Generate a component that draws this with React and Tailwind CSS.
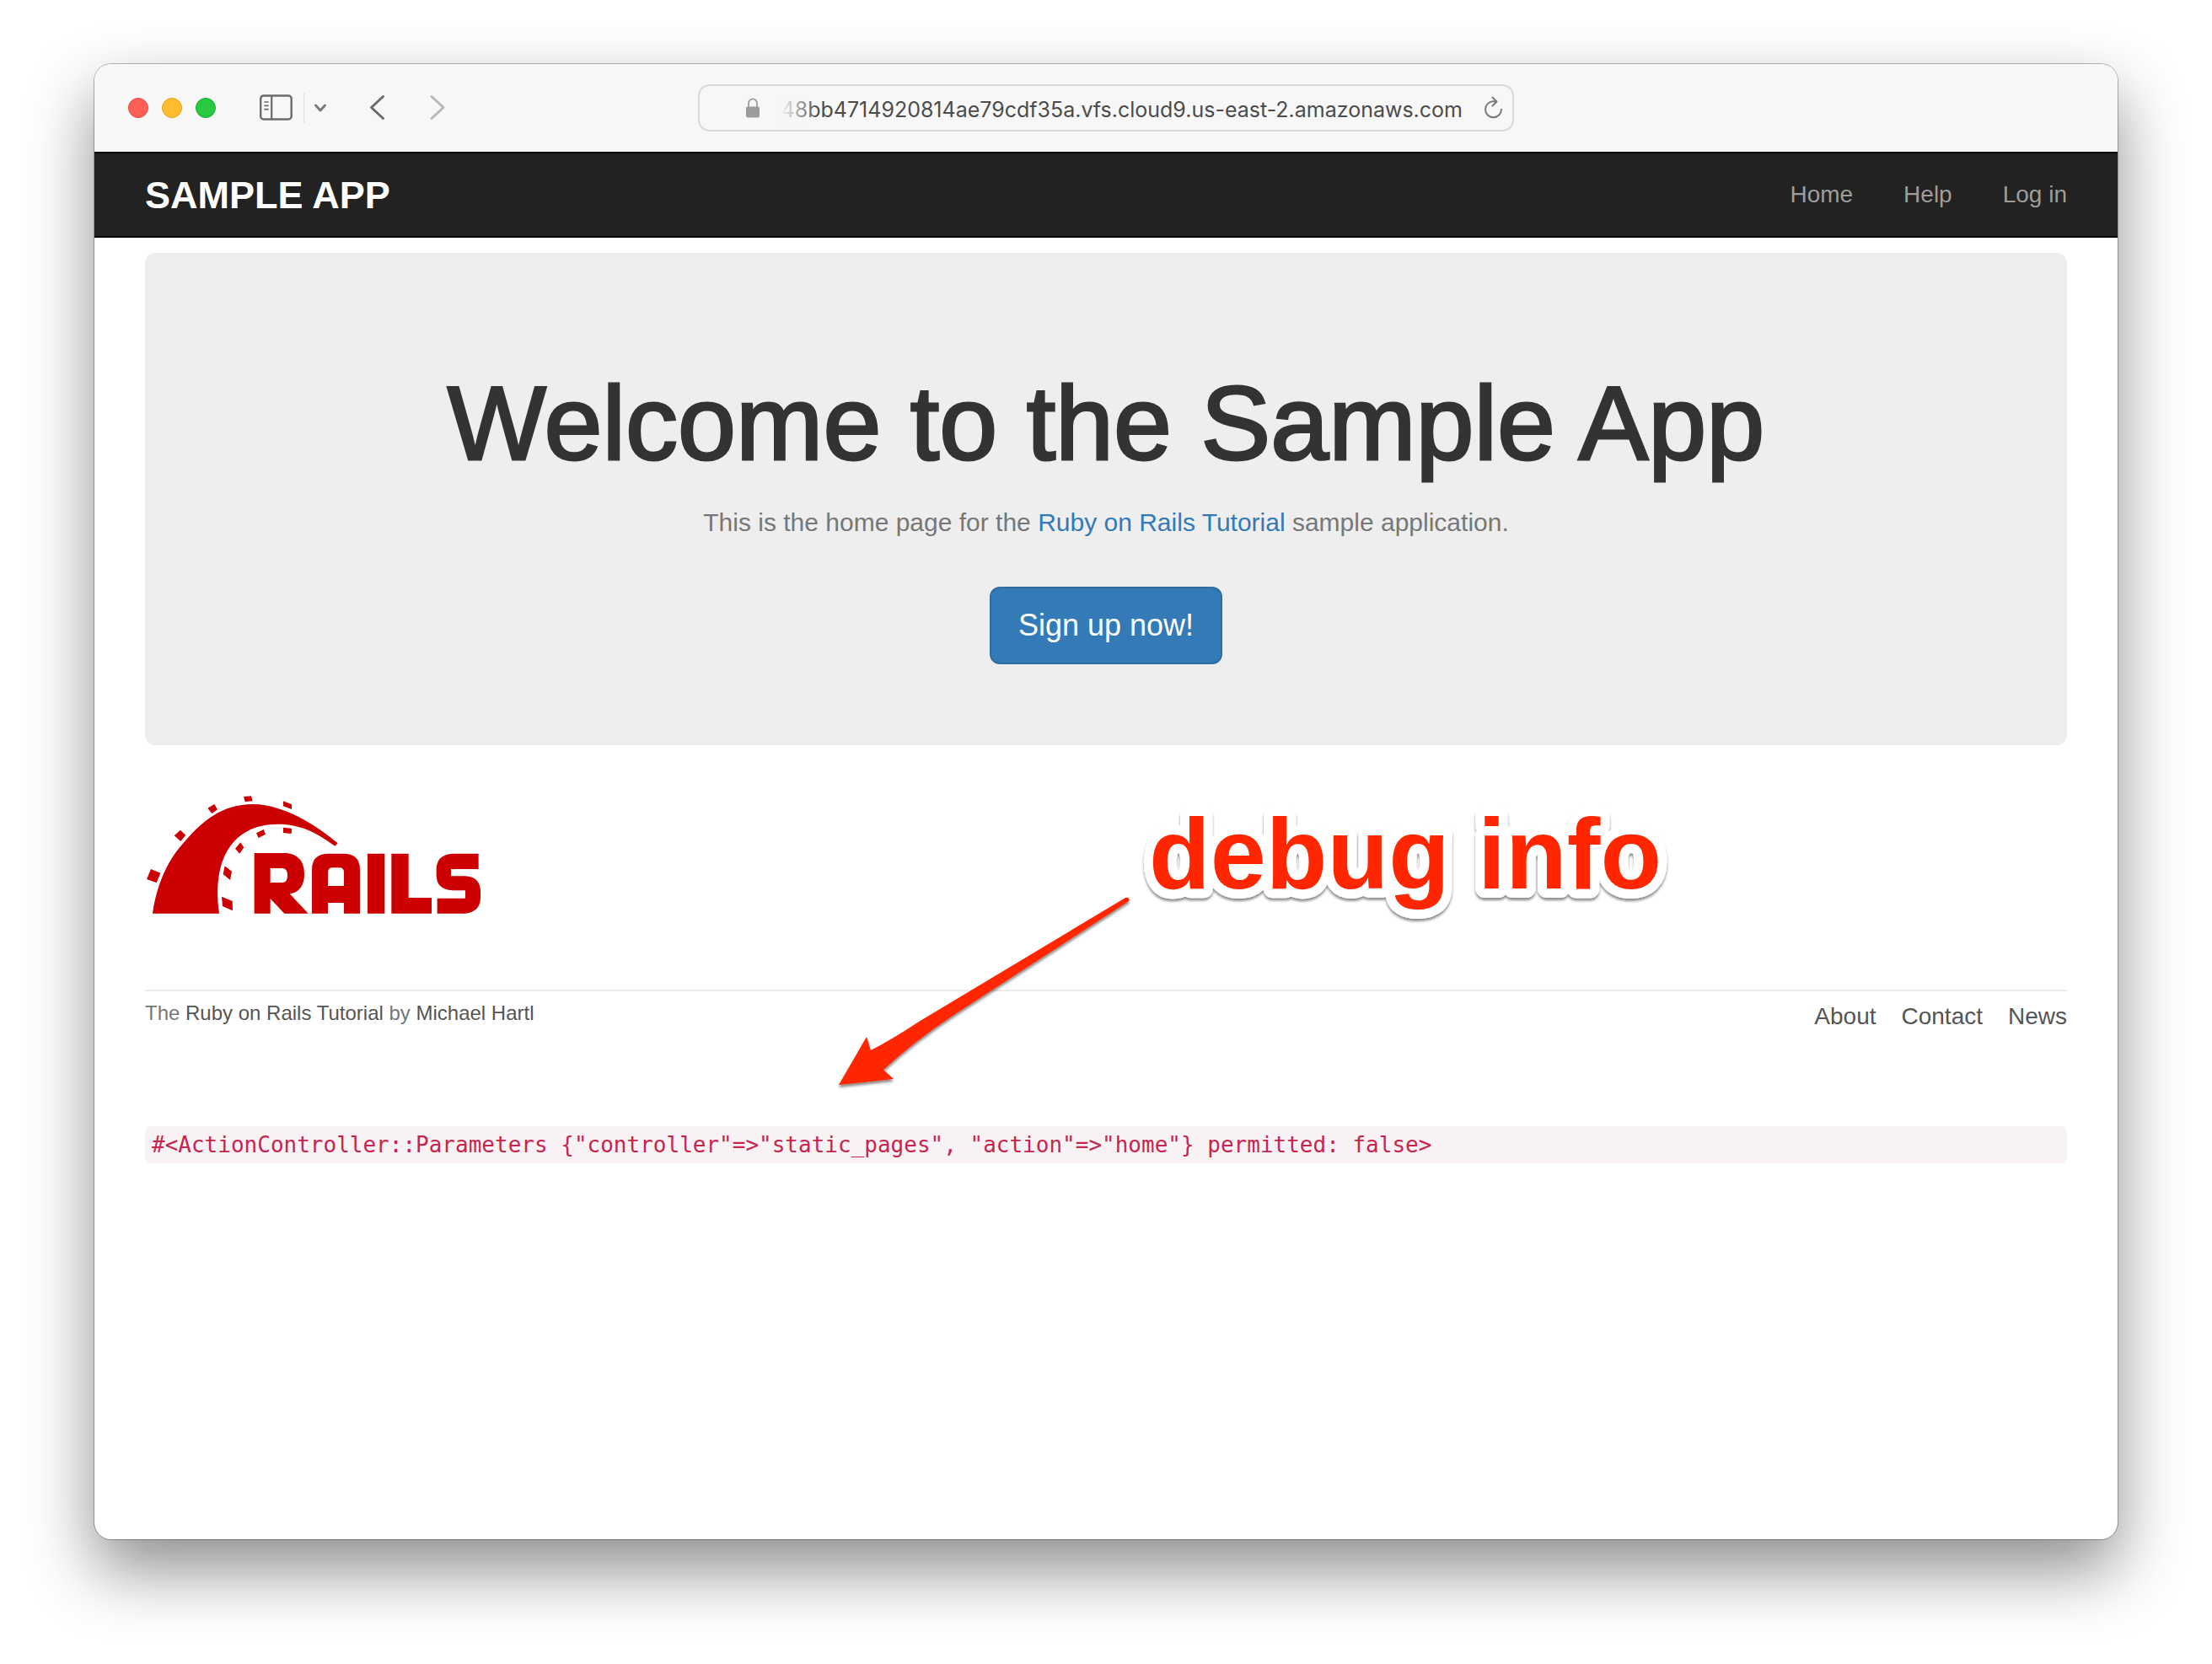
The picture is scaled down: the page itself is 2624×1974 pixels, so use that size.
const sans = 'font-["Liberation_Sans",Arial,sans-serif]'

function TrafficLights() {
  return (
    <div className="flex gap-4">
      <button aria-label="Close" className="size-6 rounded-full border border-[#e2463f] bg-[#ff5f57]" />
      <button aria-label="Minimize" className="size-6 rounded-full border border-[#e1a116] bg-[#febc2e]" />
      <button aria-label="Zoom" className="size-6 rounded-full border border-[#12ac28] bg-[#28c840]" />
    </div>
  )
}

function Toolbar() {
  return (
    <header className="grid h-[104px] grid-cols-[1fr_968px_1fr] items-center bg-[#f7f7f7]">
      <div className="flex items-center pl-10">
        <TrafficLights />
        <button aria-label="Show sidebar" className="ml-[52px]">
          <svg className="h-8 w-10" viewBox="0 0 40 32" fill="none" stroke="#6b6b6b" strokeLinecap="round">
            <rect x="1.2" y="1.5" width="36.5" height="28" rx="3.5" strokeWidth="2.4" />
            <path d="M14.2 2v27" strokeWidth="2.2" />
            <path d="M6 9h4M6 13.3h4M6 17.6h4" strokeWidth="1.7" />
          </svg>
        </button>
        <span className="ml-3 h-9 w-px bg-[#e2e2e2]" />
        <button aria-label="Tab groups" className="ml-3">
          <svg className="h-8 w-4" viewBox="0 0 16 32" fill="none" stroke="#7a7a7a" strokeWidth="3" strokeLinecap="round" strokeLinejoin="round">
            <path d="M1.5 13l5.500 6 5.500-6" />
          </svg>
        </button>
        <button aria-label="Back" className="ml-12">
          <svg className="h-8 w-5" viewBox="0 0 20 32" fill="none" stroke="#6b6b6b" strokeWidth="3" strokeLinecap="round" strokeLinejoin="round">
            <path d="M17.500 2.500L3.500 15.500l14 13" />
          </svg>
        </button>
        <button aria-label="Forward" className="ml-[52px]">
          <svg className="h-8 w-5" viewBox="0 0 20 32" fill="none" stroke="#b8b8b8" strokeWidth="3" strokeLinecap="round" strokeLinejoin="round">
            <path d="M3 2.500l14 13-14 13" />
          </svg>
        </button>
      </div>
      <div className="flex h-14 items-center rounded-[14px] border-2 border-[#d8d8d8] pr-[11px] pl-[53px]">
        <svg className="h-6 w-5" viewBox="0 0 20 24">
          <rect x="2" y="10.500" width="16" height="13" rx="2" fill="#9c9c9c" />
          <path d="M5 11V6.500a5 5.200 0 0 1 10 0V11" fill="none" stroke="#9c9c9c" strokeWidth="1.800" />
        </svg>
        <div className="relative ml-3 min-w-0 flex-1 pt-[3px]">
          <input
            aria-label="Address"
            readOnly
            defaultValue="48bb4714920814ae79cdf35a.vfs.cloud9.us-east-2.amazonaws.com"
            className="block w-full bg-transparent text-right font-[Inter,sans-serif] text-[25px] leading-8 text-[#4c4c4c] outline-none"
          />
          <span className="absolute inset-y-0 left-0 w-14 bg-linear-to-r from-[#f7f7f7] from-20% to-transparent" />
        </div>
        <button aria-label="Reload" className="ml-6">
          <svg className="h-7 w-6" viewBox="0 0 24 28" fill="none" stroke="#7a7a7a" strokeWidth="2" strokeLinecap="round" strokeLinejoin="round">
            <path d="M15.500 6.300H12.500a9.500 9.500 0 1 0 9.500 9.500" />
            <path d="M11.500 1.500l5 5-5 5" />
          </svg>
        </button>
      </div>
    </header>
  )
}

function Navbar() {
  return (
    <nav className="flex h-[102px] items-center justify-between border-y-2 border-[#080808] bg-[#222] px-[60px]">
      <a href="#home" className="text-[45px] leading-none font-bold text-white">SAMPLE APP</a>
      <ul className="flex gap-[60px] text-[28px] leading-10 text-[#9d9d9d]">
        <li><a href="#home">Home</a></li>
        <li><a href="#help">Help</a></li>
        <li><a href="#login">Log in</a></li>
      </ul>
    </nav>
  )
}

function Jumbotron() {
  return (
    <section className="mt-[18px] flex flex-col items-center rounded-xl bg-[#eee] px-[120px] pt-[136px] pb-24 text-center">
      <h1 className="text-[124px] leading-[132px] text-[#333] [-webkit-text-stroke:3px_#333]">Welcome to the Sample App</h1>
      <p className="mt-8 text-[30px] leading-10 text-[#777]">
        This is the home page for the <a href="#tutorial" className="text-[#337ab7]">Ruby on Rails Tutorial</a> sample application.
      </p>
      <a href="#signup" className="mt-14 rounded-xl border-2 border-[#2e6da4] bg-[#337ab7] px-8 py-5 text-[36px] leading-[48px] text-white">Sign up now!</a>
    </section>
  )
}

function RailsLogo() {
  return (
    <svg aria-label="Rails" role="img" className="h-[170px] w-[430px]" viewBox="0 0 1290 510" fill="#c00">
      <path d="M63 461C75 370 110 285 160 225C225 145 300 72 420 72C530 72 650 150 722 211L712 221C650 175 590 143 510 143C420 143 360 180 325 245C295 300 288 380 300 461Z" />
      <path d="M387 45l27-2 5 18-27 2zM259 86l24-14 11 19-20 14zM528 61l30 12v17l-30-11zM140 184l22-20 19 18-18 22zM57 303l34 14-14 35-35-13zM528 155l30 3-1 19-29-3zM432 175l26-13 7 17-25 13zM357 230l19-22 12 18-15 22zM320 292l25 19-6 31-25-21zM309 401l38 16 1 34-36-16z" />
      <path fillRule="evenodd" d="M425 246H540Q603 254 603 320Q603 382 551 391L617 461H532L482 408V461H425ZM482 300V351H525Q543 351 543 326Q543 300 525 300Z" />
      <path fillRule="evenodd" d="M630 461V305Q630 248 690 248H742Q801 248 801 305V461H744V423H687V461ZM687 363H744V315Q744 298 728 298H703Q687 298 687 315Z" />
      <path d="M828 248h61v213h-61zM913 248h61v157h82v56h-143z" />
      <path d="M1223 248V303H1125V328H1175Q1230 330 1230 385V405Q1230 455 1175 461H1076V407H1176V379H1130Q1073 376 1073 325V305Q1073 252 1130 248Z" />
    </svg>
  )
}

function Annotation() {
  return (
    <svg
      aria-label="debug info"
      role="img"
      className="pointer-events-none absolute top-14 left-[808px] h-[370px] w-[1020px] overflow-visible"
      viewBox="0 0 1020 370"
    >
      <defs>
        <filter id="lift" x="-5%" y="-20%" width="110%" height="150%">
          <feDropShadow dx="0" dy="3" stdDeviation="1.500" floodColor="#000" floodOpacity="0.45" />
        </filter>
      </defs>
      <path
        filter="url(#lift)"
        fill="#ff2600"
        d="M15 347L48 290L53 306Q80 292 110 272L355 125Q361 124 359 129L150 265Q105 295 68 329L80 340Z"
      />
      <text
        x="383"
        y="114"
        filter="url(#lift)"
        fill="#ff2600"
        stroke="#fff"
        strokeWidth="22"
        strokeLinejoin="round"
        paintOrder="stroke"
        className="text-[119px] font-bold"
      >
        debug info
      </text>
    </svg>
  )
}

function Footer() {
  return (
    <footer className="mt-[74px] flex justify-between border-t-2 border-[#eaeaea] text-[#777]">
      <small className="pt-1.5 text-[24px] leading-10">
        The <a href="#tutorial" className="text-[#555]">Ruby on Rails Tutorial</a> by{' '}
        <a href="#author" className="text-[#555]">Michael Hartl</a>
      </small>
      <ul className="flex gap-[30px] pt-[10px] text-[28px] leading-10 text-[#555]">
        <li><a href="#about">About</a></li>
        <li><a href="#contact">Contact</a></li>
        <li><a href="#news">News</a></li>
      </ul>
    </footer>
  )
}

export default function App() {
  return (
    <div className={`min-h-screen bg-white px-28 pt-[76px] pb-[148px] ${sans}`}>
      <div className="flex min-h-[1750px] flex-col overflow-hidden rounded-[20px] bg-white shadow-[0_0_0_1px_rgba(0,0,0,0.28),0_36px_80px_rgba(0,0,0,0.45)]">
        <Toolbar />
        <Navbar />
        <main className="px-[60px]">
          <Jumbotron />
          <div className="relative pt-[46px]">
            <a href="#rails" className="-ml-3 block w-[430px]"><RailsLogo /></a>
            <Annotation />
            <Footer />
          </div>
          <pre className="mt-[110px] rounded-lg bg-[#f8f2f4] px-2 font-['DejaVu_Sans_Mono',monospace] text-[26px] leading-[44px] text-[#c7254e]">{'#<ActionController::Parameters {"controller"=>"static_pages", "action"=>"home"} permitted: false>'}</pre>
        </main>
      </div>
    </div>
  )
}
